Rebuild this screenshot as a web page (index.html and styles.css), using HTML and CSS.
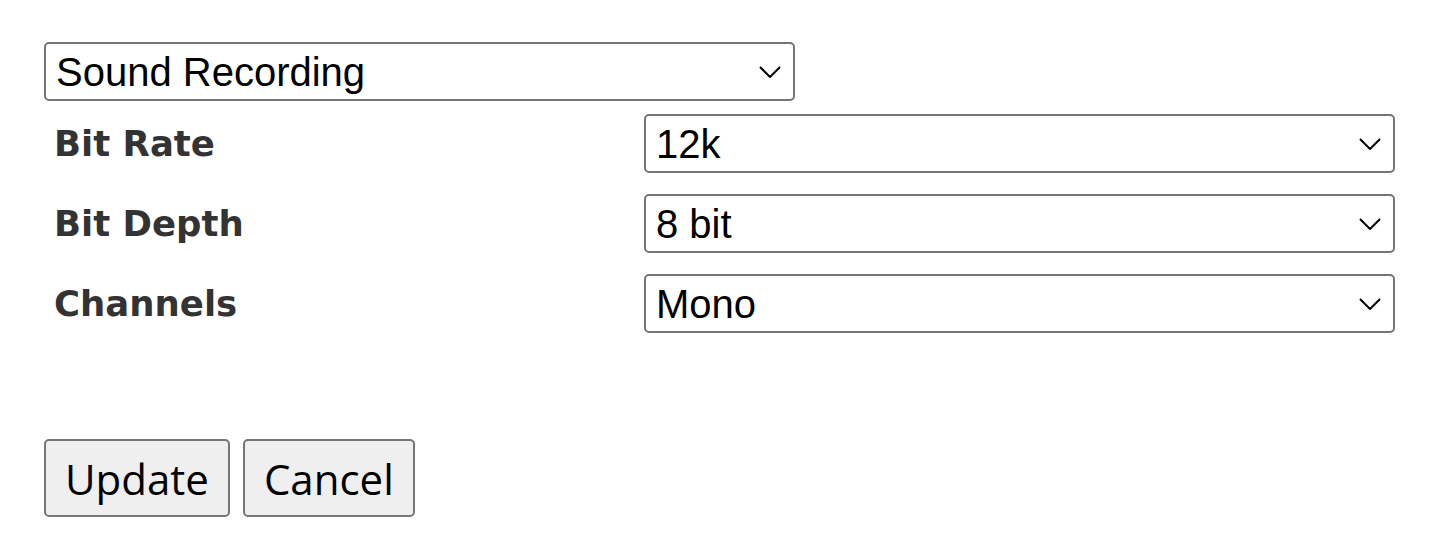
FILE: index.html
```html
<!DOCTYPE html>
<html>
<head>
<meta charset="utf-8">
<link rel="stylesheet" href="styles.css">
</head>
<body>
<form class="panel">
  <div class="field wide">
    <select class="sel">
      <option>Sound Recording</option>
    </select>
  </div>
  <div class="rows">
    <div class="row">
      <label class="lbl">Bit Rate</label>
      <select class="sel"><option>12k</option></select>
    </div>
    <div class="row">
      <label class="lbl">Bit Depth</label>
      <select class="sel"><option>8 bit</option></select>
    </div>
    <div class="row">
      <label class="lbl">Channels</label>
      <select class="sel"><option>Mono</option></select>
    </div>
  </div>
  <div class="actions">
    <button type="button" class="btn">Update</button>
    <button type="button" class="btn">Cancel</button>
  </div>
</form>
</body>
</html>
```

FILE: styles.css
```css
html, body {
  margin: 0;
  padding: 0;
  background: #ffffff;
}

.panel {
  padding: 42px 46px 0 44px;
}

.sel {
  -webkit-appearance: none;
  appearance: none;
  box-sizing: border-box;
  width: 751px;
  height: 59px;
  border: 2px solid #767676;
  border-radius: 5px;
  background-color: #ffffff;
  background-image: url("data:image/svg+xml;utf8,<svg xmlns='http://www.w3.org/2000/svg' width='22' height='12' viewBox='0 0 22 12'><path d='M1 1 L11 11 L21 1' fill='none' stroke='black' stroke-width='2'/></svg>");
  background-repeat: no-repeat;
  background-position: right 12px center;
  padding: 0 40px 0 10px;
  font-family: "Liberation Sans", Arial, sans-serif;
  font-size: 40px;
  color: #000000;
  margin: 0;
}

.rows {
  margin-top: 13px;
  display: flex;
  flex-direction: column;
  gap: 21px;
}

.row {
  display: grid;
  grid-template-columns: 600px 751px;
  align-items: center;
}

.lbl {
  font-family: "DejaVu Sans", Verdana, sans-serif;
  font-weight: bold;
  font-size: 35.5px;
  color: #333333;
  padding-left: 10px;
}

.actions {
  margin-top: 106px;
  display: flex;
  gap: 13px;
}

.btn {
  box-sizing: border-box;
  height: 78px;
  padding: 0 19px;
  border: 2px solid #767676;
  border-radius: 5px;
  background: #efefef;
  font-family: "Open Sans", "Noto Sans", sans-serif;
  font-size: 42px;
  color: #000000;
  margin: 0;
}
```
